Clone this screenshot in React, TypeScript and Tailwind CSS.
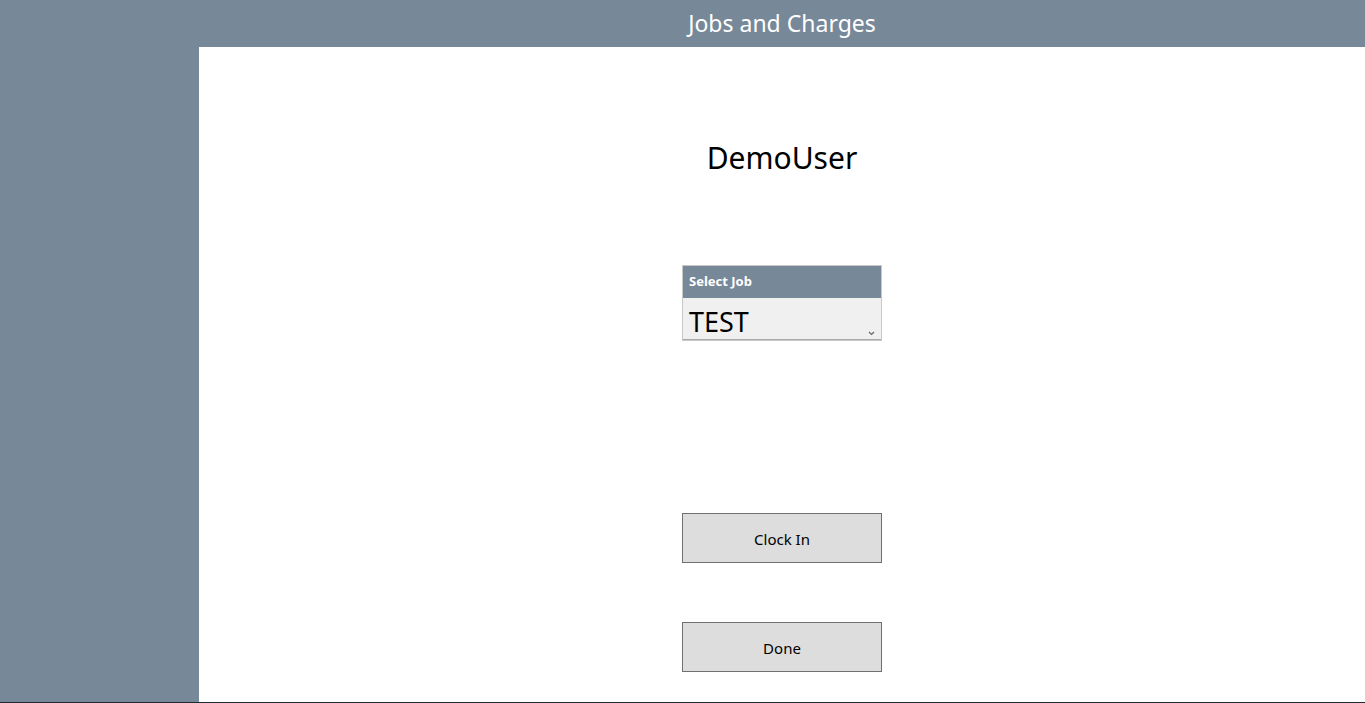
import React from "react";

export default function App() {
  const font = { fontFamily: '"Noto Sans", "Open Sans", sans-serif' };
  return (
    <div className="w-[1365px] h-[703px] flex flex-col bg-[#778899] overflow-hidden" style={font}>
      <div className="h-[47px] flex shrink-0">
        <div className="w-[199px] shrink-0" />
        <div className="flex-1 flex items-center justify-center text-white text-[23px]">
          Jobs and Charges
        </div>
      </div>
      <div className="flex flex-1 min-h-0">
        <div className="w-[199px] shrink-0" />
        <div className="flex-1 bg-white flex flex-col items-center">
          <div className="mt-[91px] text-[30px] leading-[40px] text-black">DemoUser</div>
          <div className="mt-[87px] w-[200px] border border-[#c8c8c8] flex flex-col">
            <div className="h-[32px] bg-[#778899] flex items-center px-[6px] text-white text-[13px] font-bold">
              Select Job
            </div>
            <div className="h-[42px] bg-[#f0f0f0] border-b border-[#a9a9a9] relative flex items-end px-[6px]">
              <span className="text-[27px] leading-[34px] text-black">TEST</span>
              <svg className="absolute right-[6px] bottom-[3px]" width="7" height="5" viewBox="0 0 7 5">
                <path d="M1 1 L3.5 3.5 L6 1" fill="none" stroke="#666" strokeWidth="1.2" />
              </svg>
            </div>
          </div>
          <button className="mt-[172px] w-[200px] h-[50px] bg-[#dddddd] border border-[#707070] text-[15px] text-black pt-[2px]">
            Clock In
          </button>
          <button className="mt-[59px] w-[200px] h-[50px] bg-[#dddddd] border border-[#707070] text-[15px] text-black pt-[2px]">
            Done
          </button>
        </div>
      </div>
      <div className="h-[1px] bg-[#1f2a33] shrink-0" />
    </div>
  );
}
